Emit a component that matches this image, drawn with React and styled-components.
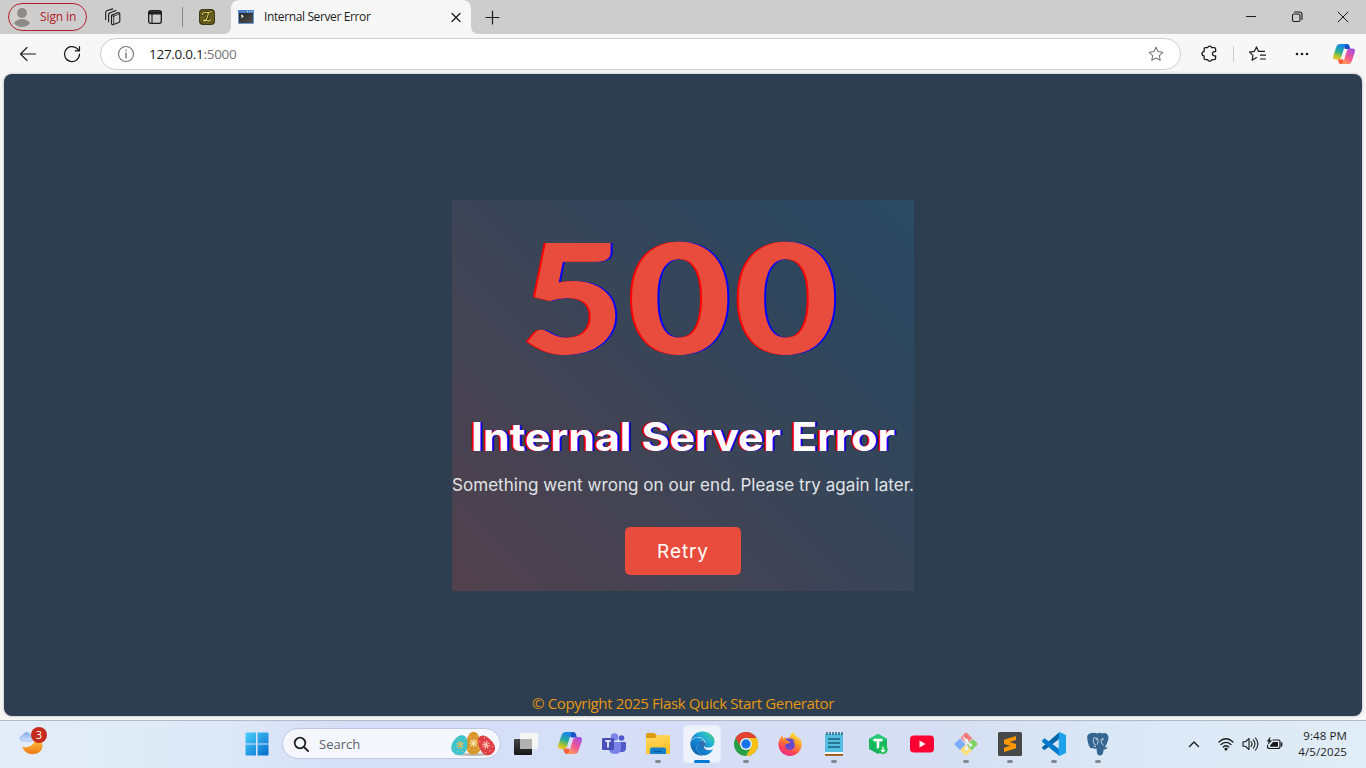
import React from 'react';
import styled, { createGlobalStyle } from 'styled-components';
import { SiFirefoxbrowser } from 'react-icons/si';
import { FaEdge } from 'react-icons/fa';

const GlobalStyle = createGlobalStyle`
  * { box-sizing: border-box; }
  body { margin: 0; overflow: hidden; }
`;

const ui = `"Open Sans", "Noto Sans", sans-serif`;

const Screen = styled.div`
  width: 1366px;
  height: 768px;
  display: flex;
  flex-direction: column;
  background: #f7f7f7;
  font-family: ${ui};
  overflow: hidden;
`;

const Label = styled.span`
  font-size: ${p => p.$size || 12}px;
  letter-spacing: ${p => p.$track || 0}px;
  color: ${p => p.$color || '#1b1b1b'};
  line-height: 16px;
  white-space: nowrap;
`;

/* Tab strip */
const TabStrip = styled.header`
  height: 34px;
  flex: none;
  display: flex;
  align-items: center;
  background: #cdcdcd;
`;
const SignIn = styled.div`
  width: 79px;
  height: 28px;
  margin-left: 8px;
  padding-left: 3px;
  border: 1px solid #b1202a;
  border-radius: 14px;
  display: flex;
  align-items: center;
  gap: 8px;
`;
const StripIcon = styled.span`
  display: flex;
  margin-left: ${p => p.$left}px;
`;
const StripDivider = styled.span`
  width: 1px;
  height: 20px;
  margin-left: 20px;
  background: #888;
`;
const Tab = styled.div`
  width: 240px;
  height: 34px;
  margin-left: 16px;
  padding: 0 8px 0 7px;
  display: flex;
  align-items: center;
  background: #f7f7f7;
  border-radius: 8px 8px 0 0;
  box-shadow: 8px 8px 0 0 #f7f7f7, -8px 8px 0 0 #f7f7f7;
  clip-path: path('M-8 34 Q0 34 0 26 V8 Q0 0 8 0 H232 Q240 0 240 8 V26 Q240 34 248 34 Z');
`;
const TabTitle = styled(Label)`
  flex: 1;
  margin-left: 10px;
`;
const WindowButtons = styled.div`
  margin-left: auto;
  display: flex;
`;
const WindowButton = styled.span`
  width: 46px;
  display: flex;
  justify-content: center;
`;

/* Address toolbar */
const Toolbar = styled.div`
  height: 40px;
  flex: none;
  display: flex;
  align-items: center;
  padding-left: 18px;
`;
const NavIcon = styled.span`
  width: 20px;
  margin-right: ${p => p.$right}px;
  display: flex;
  justify-content: center;
`;
const AddressBar = styled.div`
  width: 1081px;
  height: 32px;
  padding: 0 15px 0 16px;
  display: flex;
  align-items: center;
  background: #fff;
  border: 1px solid #cfcfcf;
  border-radius: 16px;
`;
const Url = styled(Label)`
  flex: 1;
  margin-left: 14px;
`;
const ToolbarActions = styled.div`
  display: flex;
  align-items: center;
  padding-left: 19px;
`;
const ActionDivider = styled.span`
  width: 1px;
  height: 16px;
  margin: 0 14px 0 14px;
  background: #ccc;
`;

/* Web page */
const Page = styled.main`
  height: 642px;
  flex: none;
  margin: 0 4px;
  padding-top: 126px;
  display: flex;
  flex-direction: column;
  align-items: center;
  background: #2c3e50;
  border-radius: 8px;
  box-shadow: 0 0 3px rgba(0, 0, 0, 0.3);
`;
const ErrorCard = styled.section`
  width: 462px;
  height: 391px;
  display: flex;
  flex-direction: column;
  align-items: center;
  font-family: Inter, "Open Sans", sans-serif;
  background: linear-gradient(45deg, rgba(231, 76, 60, 0.2), rgba(52, 100, 140, 0.22) 78%, rgba(42, 100, 140, 0.33));
  white-space: nowrap;
`;
const Code = styled.h1`
  margin: 0;
  height: 199px;
  padding-right: 3px;
  line-height: 191px;
  font-family: Lato, sans-serif;
  font-size: 153px;
  font-weight: 900;
  letter-spacing: 3px;
  transform: scaleX(1.165);
  color: #e74c3c;
  text-shadow: -1.7px 0 #f00, 1.7px 0 #00f;
`;
const Heading = styled.h2`
  margin: 13px 0 0;
  height: 49px;
  line-height: 49px;
  font-size: 39px;
  font-weight: 750;
  letter-spacing: 0;
  transform: scaleX(1.098);
  color: #fff;
  text-shadow: -1.8px 0 #f00, 1.8px 0 #00f;
`;
const Message = styled.p`
  margin: 13px 0 0;
  height: 22px;
  line-height: 22px;
  font-size: 17px;
  letter-spacing: 0.05px;
  color: #e0e4e5;
`;
const RetryButton = styled.button`
  width: 116px;
  height: 48px;
  margin: 31px 0 0;
  padding: 1px 0 0;
  border: 0;
  border-radius: 5px;
  background: #e74c3c;
  color: #fff;
  font: 400 19px/47px Inter, sans-serif;
  letter-spacing: 0.9px;
`;
const Footer = styled.footer`
  margin-top: auto;
  height: 25px;
  line-height: 24px;
  font-size: 15px;
  letter-spacing: -0.36px;
  color: #e8970f;
  white-space: nowrap;
`;

/* Taskbar */
const Taskbar = styled.nav`
  height: 48px;
  margin-top: 4px;
  flex: none;
  display: flex;
  align-items: center;
  border-top: 1px solid #b3bac6;
  padding-bottom: 2px;
  background: linear-gradient(90deg, #e2edf8 0%, #dfeaf8 14%, #d5e0f8 25%, #d5def6 50%, #d5def2 68%, #dae7f5 80%, #e0edf8 100%);
`;
const Weather = styled.div`
  width: 235px;
  padding: 0 0 4px 18px;
  display: flex;
`;
const AppCell = styled.div`
  position: relative;
  width: 44px;
  height: 45px;
  display: flex;
  justify-content: center;
  align-items: center;
`;
const ActivePlate = styled.div`
  width: 38px;
  height: 38px;
  display: flex;
  justify-content: center;
  align-items: center;
  background: #edf2fc;
  border: 1px solid #e4eaf7;
  border-radius: 4px;
`;
const Indicator = styled.span`
  position: absolute;
  bottom: 3px;
  left: 50%;
  width: ${p => (p.$active ? 16 : 6)}px;
  height: 3px;
  transform: translateX(-50%);
  border-radius: 2px;
  background: ${p => (p.$active ? '#0078d4' : '#838993')};
`;
const SearchBox = styled.div`
  width: 219px;
  height: 31px;
  margin: 0 3px;
  padding: 0 5px 0 10px;
  display: flex;
  align-items: center;
  background: #f4f7fe;
  border: 1px solid #bdc8e0;
  border-radius: 16px;
`;
const SearchText = styled(Label)`
  flex: 1;
  margin-left: 10px;
`;
const Tray = styled.div`
  margin-left: auto;
  padding-right: 19px;
  display: flex;
  align-items: center;
`;
const TrayIcon = styled.span`
  display: flex;
  margin-right: ${p => p.$right}px;
`;
const Clock = styled.div`
  width: 52px;
  display: flex;
  flex-direction: column;
  align-items: flex-end;
`;

const Line = ({ w = 20, h = 20, box, color = '#1b1b1b', sw = 1.2, children }) => (
  <svg width={w} height={h} viewBox={box || `0 0 ${w} ${h}`} fill="none" stroke={color}
    strokeWidth={sw} strokeLinecap="round" strokeLinejoin="round">{children}</svg>
);
const star = 'M10 2.4l2.3 4.9 5.3.7-3.9 3.7 1 5.3-4.7-2.6L5.3 17l1-5.3L2.4 8l5.3-.7z';

const Avatar = () => (
  <svg width="20" height="22" viewBox="0 0 20 22">
    <circle cx="10" cy="11" r="10" fill="#d5d0cc" />
    <circle cx="10" cy="7" r="5" fill="#8d8b89" />
    <path d="M2 17q3-4 8-4t8 4q-3 4-8 4t-8-4z" fill="#8d8b89" />
  </svg>
);
const Workspaces = () => (
  <Line w={18} h={18} sw={1.1}>
    <path d="M7.500 7.300l6-2.500q1.800-.6 2.300 1v7.600l-1 1.200-5.300 2q-1.700.5-2-1z" />
    <path d="M9.700 8.200v7.500M9.700 8.200l5.800-2.400M7.700 7.500l2 .7" strokeWidth=".8" />
    <path d="M4.600 13.800V6.400l1-1.500 6.200-2.500M1.700 11.500V4.300l1-1.600L8.700.9" />
  </Line>
);
const TabPane = () => (
  <Line w={14} h={14} sw={1.3}>
    <rect x=".7" y=".7" width="12.6" height="12.6" rx="2" />
    <path d="M1 2h12v1.8H1z" fill="#1b1b1b" /><path d="M4 4v9" strokeWidth="1.1" />
  </Line>
);
const LetterBadge = () => (
  <svg width="16" height="16" viewBox="0 0 16 16">
    <rect width="16" height="16" rx="4" fill="#3d3811" />
    <rect x="1" y="1" width="14" height="14" rx="4" fill="#6a5f20" />
    <path d="M3.500 6.500Q3 3.500 7 3.500t6-1M9.500 4q-1 5-3.100 8H4.300q.6-1.600 2.400-.8l3 .8 2.300-1.600" fill="none" stroke="#2c2808" strokeWidth="2.600" />
    <path d="M3.500 6Q3 3.300 7 3.500t6-1M9.500 4q-1 5-3.100 8H4.300q.6-1.600 2.400-.8l3 .8 2.300-1.600" fill="none" stroke="#dccb66" strokeWidth="1.200" />
  </svg>
);
const TerminalIcon = () => (
  <svg width="16" height="14" viewBox="0 0 16 14">
    <defs><linearGradient id="term" x2="1" y2="1"><stop stopColor="#252525" /><stop offset="1" stopColor="#505050" /></linearGradient></defs>
    <rect width="16" height="14" rx="1" fill="#6b99d6" />
    <path d="M0 1q0-1 1-1h14q1 0 1 1v2H0z" fill="#4a7ec7" />
    <path d="M9 1.5h1m1.3 0h1m1.3 0h1" stroke="#dae7f7" />
    <rect x="1" y="3" width="14" height="10" fill="url(#term)" />
    <path d="M3.300 5L4.900 6.300 3.300 7.600" fill="none" stroke="#fff" strokeWidth="1.100" />
  </svg>
);
const Copilot = ({ size, id }) => (
  <svg width={size} height={size * 0.92} viewBox="0 0 24 22">
    <defs>
      <linearGradient id={`${id}a`} x1=".5" x2=".2" y2="1"><stop stopColor="#1683e8" /><stop offset=".45" stopColor="#25ad9c" /><stop offset=".75" stopColor="#a8c531" /><stop offset="1" stopColor="#fbc32a" /></linearGradient>
      <linearGradient id={`${id}b`} x1=".8" x2=".2" y2="1"><stop stopColor="#a34ee5" /><stop offset=".5" stopColor="#ef5596" /><stop offset="1" stopColor="#ffa052" /></linearGradient>
    </defs>
    <path d="M11 0h4.200q2 0 2.700 2l1 3.500h-6z" fill="#194fc5" />
    <path d="M5 16.500h6l2 5.500H8.800Q6.700 22 6 19.500z" fill="#f5633d" />
    <path d="M7.800 0H15q-1.800.4-2.500 3L9 14.500Q8.100 17 5.500 17H3Q-.7 17 .3 13L3.500 3.200Q4.700 0 7.800 0z" fill={`url(#${id}a)`} />
    <path d="M16.200 22H9q1.800-.4 2.500-3L15 7.500Q15.900 5 18.500 5H21q3.700 0 2.700 4l-3.200 9.800Q19.300 22 16.200 22z" fill={`url(#${id}b)`} />
  </svg>
);
const WeatherIcon = () => (
  <svg width="30" height="30" viewBox="0 0 30 30">
    <defs>
      <linearGradient id="moon" x2="0" y2="1"><stop stopColor="#ffc53b" /><stop offset="1" stopColor="#ed7818" /></linearGradient>
      <linearGradient id="cloud" x2="0" y2="1"><stop stopColor="#83aaf0" /><stop offset="1" stopColor="#d6e6ff" /></linearGradient>
    </defs>
    <path d="M4 20q7 1 11-3 2-2 2-5 8 1 7.500 7-1 8-10 8.200Q7 27 4 20z" fill="url(#moon)" />
    <path d="M5 14q-3 0-3-2.500t3-3Q6 5 9.300 5.500q2.700.5 3.500 3.500 3 2 1.200 5z" fill="url(#cloud)" stroke="#7ea4e7" strokeWidth=".6" />
    <circle cx="21" cy="8" r="8" fill="#c42b1c" />
    <text x="21" y="12" textAnchor="middle" fontFamily="Open Sans, sans-serif" fontSize="11" fill="#fff">3</text>
  </svg>
);
const WindowsLogo = () => (
  <svg width="24" height="24" viewBox="0 0 24 24">
    <defs><linearGradient id="win" gradientUnits="userSpaceOnUse" x1="0" y1="0" x2="24" y2="24"><stop stopColor="#4fd3ff" /><stop offset="1" stopColor="#0069c9" /></linearGradient></defs>
    <path d="M1 .5h10v11H.5V1zM12.500.5H23l.5.5v10.500h-11zM.5 12.500H11v11H1l-.5-.5zM12.500 12.500h11V23l-.5.5H12.500z" fill="url(#win)" />
  </svg>
);
const Egg = ({ x, y, r, w, h, fill, mark }) => (
  <g transform={`translate(${x} ${y}) rotate(${r})`}>
    <path d={`M0 ${-h}C${w * .8} ${-h} ${w} 0 ${w} ${h * .2}C${w} ${h * .75} ${w * .6} ${h} 0 ${h}S${-w} ${h * .75} ${-w} ${h * .2}C${-w} 0 ${-w * .8} ${-h} 0 ${-h}z`} fill={fill} />
    <path d="M-4 0h8M0-4v8M-3-3l6 6M3-3l-6 6M-5 6h1m4 1h1m3-2h1M-4-6h1m5-1h1" stroke={mark} strokeWidth="1.1" />
  </g>
);
const Eggs = () => (
  <svg width="44" height="26" viewBox="0 0 44 26">
    <ellipse cx="22" cy="23.500" rx="19" ry="1.500" fill="#bdb7b3" />
    <Egg x={22.500} y={12} r={0} w={7.500} h={11.300} fill="#d9962b" mark="#fae0a0" />
    <Egg x={9} y={14} r={22} w={7.800} h={10} fill="#3bc5cf" mark="#e9bc58" />
    <Egg x={35} y={14} r={-32} w={7.300} h={10.500} fill="#e03e45" mark="#ffc2ad" />
  </svg>
);
const TaskView = () => (
  <svg width="26" height="24" viewBox="0 0 26 24">
    <defs><linearGradient id="tv" x2="0" y2="1"><stop stopColor="#454545" /><stop offset="1" stopColor="#161616" /></linearGradient></defs>
    <rect x="1" y="7" width="18" height="16" rx="1" fill="url(#tv)" />
    <rect x="7" y="1" width="18" height="16" rx="1" fill="#f5f5f4" /><path d="M7 7h12v10H7z" fill="#b1b1b1" />
  </svg>
);
const Teams = () => (
  <svg width="24" height="22" viewBox="0 0 24 22">
    <circle cx="19.500" cy="5" r="2.800" fill="#5059c9" /><path d="M16 9h7q1 0 1 1v5q0 4-4 4h-4z" fill="#5059c9" />
    <circle cx="12.500" cy="4" r="3.700" fill="#7b83eb" /><path d="M7 9h12v6.500q0 5.500-6 5.500t-6-5.500z" fill="#7b83eb" />
    <rect y="5" width="12" height="12" rx="1" fill="#4950b8" /><path d="M3.200 8h5.600M6 8v6.500" stroke="#fff" strokeWidth="1.600" />
  </svg>
);
const Folder = () => (
  <svg width="24" height="22" viewBox="0 0 24 22">
    <defs><linearGradient id="fold" x2=".4" y2="1"><stop stopColor="#ffdc69" /><stop offset="1" stopColor="#ffbf26" /></linearGradient></defs>
    <path d="M0 1.500Q0 0 1.500 0h6q1 0 2 1L11 3v5H0z" fill="#dc9c0b" />
    <path d="M0 5h9l2.500-3H23q1 0 1 1v17q0 1-1 1H1q-1 0-1-1z" fill="url(#fold)" />
    <path d="M4 21v-4.500Q4 14.500 6 14.500h12q2 0 2 2V21z" fill="#1380ce" /><path d="M8 18.500h8" stroke="#075a9d" strokeWidth="1.300" />
  </svg>
);
const Edge = () => (
  <svg width="25" height="25" viewBox="0 0 25 25">
    <defs><linearGradient id="edg" x1="0" y1="1" x2="1" y2="0"><stop stopColor="#0b55a5" /><stop offset=".45" stopColor="#1589d4" /><stop offset=".7" stopColor="#25b8d3" /><stop offset="1" stopColor="#55d65a" /></linearGradient></defs>
    <path d="M8 11q5-4 8 2l-2 3q1 4 8 3-5 7-11 4.500Q5 20 8 11z" fill="#0c59a4" opacity=".85" />
    <FaEdge size={25} fill="url(#edg)" />
  </svg>
);
const Chrome = () => (
  <svg width="24" height="24" viewBox="0 0 24 24">
    <circle cx="12" cy="12" r="12" fill="#28a047" />
    <path d="M1.600 6A12 12 0 0 1 22.400 6H12a6 6 0 0 0-5.200 9z" fill="#e34133" />
    <path d="M22.400 6A12 12 0 0 1 12 24l5.200-9A6 6 0 0 0 12 6z" fill="#fbc116" />
    <circle cx="12" cy="12" r="6" fill="#fff" /><circle cx="12" cy="12" r="4.700" fill="#1a73e8" />
  </svg>
);
const Firefox = () => (
  <svg width="24" height="24" viewBox="0 0 24 24">
    <defs><linearGradient id="ffx" x1=".8" y1="0" x2=".3" y2="1"><stop stopColor="#fff04a" /><stop offset=".4" stopColor="#ff9b24" /><stop offset=".75" stopColor="#ff4455" /><stop offset="1" stopColor="#e52b91" /></linearGradient></defs>
    <circle cx="11.800" cy="12.500" r="7" fill="#6848cf" />
    <SiFirefoxbrowser size={24} fill="url(#ffx)" />
  </svg>
);
const Notepad = () => (
  <svg width="20" height="26" viewBox="0 0 20 26">
    <rect x="1" y="3" width="18" height="19" rx="1" fill="#54bde0" />
    <path d="M3 1v3M6 1v3M9 1v3M12 1v3M15 1v3M18 1v3" stroke="#17627e" strokeWidth="1.400" />
    <path d="M4 8h12M4 12h12M4 16h12" stroke="#17627e" strokeWidth="1.600" />
    <path d="M1 21h18v2H1z" fill="#f6f7f7" /><path d="M1 23h18v1.800H1z" fill="#9d520e" />
  </svg>
);
const Hexagon = () => (
  <svg width="24" height="24" viewBox="0 0 24 24">
    <path d="M12 2l9 5v10l-9 5-9-5V7z" fill="#15b55c" /><path d="M12 2l9 5-9 5-9-5z" fill="#22c970" />
    <path d="M7.500 8h9M12 8v8.500" stroke="#fff" strokeWidth="2.600" /><circle cx="17" cy="17.500" r="4.700" fill="#20bd58" />
    <path d="M17 14.800v5m-2-2l2 2 2-2" fill="none" stroke="#fff" strokeWidth="1.200" />
  </svg>
);
const Youtube = () => (
  <svg width="24" height="18" viewBox="0 0 24 18"><rect y=".5" width="24" height="17" rx="4" fill="#ff0033" /><path d="M9.500 5.500v7l6-3.500z" fill="#fff" /></svg>
);
const Git = () => (
  <svg width="24" height="24" viewBox="0 0 24 24">
    <path d="M11 1q1-1 2 0l5.500 5.500-6 5L6.500 6z" fill="#f77d7d" /><path d="M19 7l4 4q1 1 0 2l-5.500 5.500-5-6z" fill="#80d063" />
    <path d="M11.500 12.500l6 6L13 23q-1 1-2 0l-5-5z" fill="#ffdf76" /><path d="M6 6.500l5.500 6L6 18l-5-5q-1-1 0-2z" fill="#7cadfa" />
    <path d="M9 5l3.500 4v8M12.500 9l4 4" stroke="#eff0f4" strokeWidth="1.600" fill="none" />
    <circle cx="12.500" cy="8.500" r="1.800" fill="#eff0f4" /><circle cx="12.500" cy="17" r="1.800" fill="#eff0f4" /><circle cx="16.500" cy="13" r="1.800" fill="#eff0f4" />
  </svg>
);
const Sublime = () => (
  <svg width="24" height="24" viewBox="0 0 24 24"><rect width="24" height="24" rx="1.500" fill="#484848" />
    <path d="M6 7.800l12-3.900v4l-6.500 2.200L18 12v4.200L6 20v-4.200l6.500-2L6 12z" fill="#ff9800" /></svg>
);
const VSCode = () => (
  <svg width="24" height="24" viewBox="0 0 24 24">
    <path d="M0 15.200L17.500 0v6.700L2.500 18 .4 16.800z" fill="#0065a9" />
    <path d="M0 8.500l2.500-2.200 15 11V24L.3 10z" fill="#007acc" />
    <path d="M17.500 0L24 3v18l-6.500 3q-.7-.3-.7-1V1q0-.7.700-1z" fill="#1ea2ed" />
  </svg>
);
const Postgres = () => (
  <svg width="24" height="24" viewBox="0 0 24 24">
    <path d="M5.500 1Q9 .3 11 1.500q3-1.300 5 0 3-1.200 5 .5 2.500 2.500.8 7-1 3.500-3 6.200l3 .3q-1 2-4.200 2.200-.3 4.800-2.600 5.500-3.500.9-4-2.700l-.5-4q-2 .8-4-.4-2.200 1-3.500-2Q1 8.500 1.200 4.800 1.500 1.500 5.500 1z" fill="#336791" />
    <path d="M8.500 5Q7 7 7.500 10q.4 2.700 2.500 3M9 6.200q3-1 3 1.200.4 2.500-.8 5.300M18 7q-3-1.200-3 1.200 0 3 2.500 5.500M7.300 13.700q.7 1 2.700 .8" fill="none" stroke="#dce4ee" strokeWidth=".8" />
    <path d="M10 7.500h.8M16.200 8h.7" stroke="#fff" strokeWidth="1.200" />
  </svg>
);
const Wifi = () => (
  <Line w={16} h={14} sw={1.200}><path d="M1 5Q8-1.500 15 5M3 7.500q5-4.400 10 0M5.200 10q2.800-2.500 5.600 0" /><circle cx="8" cy="12" r="1" fill="#1b1b1b" /></Line>
);
const Volume = () => (
  <Line w={17} h={14} sw={1.1}><path d="M1 4.800h2.500L7 1.500v11L3.500 9.300H1zM9 4.500q2 2.500 0 5M11.300 2.800q3.300 4.200 0 8.400M13.500 1q4.700 6 0 12" /></Line>
);
const Battery = () => (
  <Line w={17} h={14} sw={1.2}><path d="M7 3h5.500q1.500 0 1.500 1.500v5q0 2-2 2H3.500q-2 0-2-2V8.500" /><path d="M15.600 6v3" strokeWidth="1.500" />
    <path d="M7 5h5v4.700H4V8.500z" fill="#1b1b1b" stroke="none" /><path d="M4 .4L1 4.300h2L2 7.500l3.800-4H3.900z" fill="#1b1b1b" strokeWidth=".4" /></Line>
);

const apps = [
  { name: 'taskview', icon: <TaskView /> },
  { name: 'copilot', icon: <Copilot size={24} id="tb" /> },
  { name: 'teams', icon: <Teams /> },
  { name: 'explorer', icon: <Folder />, open: true },
  { name: 'edge', icon: <Edge />, open: true, active: true },
  { name: 'chrome', icon: <Chrome />, open: true },
  { name: 'firefox', icon: <Firefox /> },
  { name: 'notepad', icon: <Notepad />, open: true },
  { name: 'downloader', icon: <Hexagon /> },
  { name: 'youtube', icon: <Youtube /> },
  { name: 'git', icon: <Git />, open: true },
  { name: 'sublime', icon: <Sublime />, open: true },
  { name: 'vscode', icon: <VSCode />, open: true },
  { name: 'postgres', icon: <Postgres />, open: true },
];

export default function App() {
  return (
    <Screen>
      <GlobalStyle />
      <TabStrip>
        <SignIn><Avatar /><Label $color="#b1202a" $track={-0.1}>Sign in</Label></SignIn>
        <StripIcon $left={17}><Workspaces /></StripIcon>
        <StripIcon $left={26}><TabPane /></StripIcon>
        <StripDivider />
        <StripIcon $left={16}><LetterBadge /></StripIcon>
        <Tab>
          <TerminalIcon />
          <TabTitle $track={-0.38}>Internal Server Error</TabTitle>
          <Line w={14} h={14} sw={1.3}><path d="M3 3.500l8 8M11 3.500l-8 8" /></Line>
        </Tab>
        <StripIcon $left={14}><Line w={15} h={15} sw={1.2}><path d="M7.500 1v13M1 7.500h13" /></Line></StripIcon>
        <WindowButtons>
          <WindowButton><Line w={12} h={12} sw={1}><path d="M1.500 5.500h9" /></Line></WindowButton>
          <WindowButton><Line w={12} h={12} sw={1.1}><rect x="1.500" y="3" width="7.500" height="7.500" rx="1.500" /><path d="M3.500 1h5Q11 1 11 3.500v5" /></Line></WindowButton>
          <WindowButton><Line w={12} h={12} sw={1}><path d="M1 1l10 10M11 1L1 11" /></Line></WindowButton>
        </WindowButtons>
      </TabStrip>
      <Toolbar>
        <NavIcon $right={24}><Line sw={1.1}><path d="M17.500 10h-15M9 3.500L2.500 10 9 16.500" /></Line></NavIcon>
        <NavIcon $right={18}><Line sw={1.2}><path d="M17.500 10A7.500 7.500 0 1 1 15 4.500L17 6.500M17.500 2.500v4.300h-4.300" /></Line></NavIcon>
        <AddressBar>
          <Line w={18} h={18} color="#767676" sw={1.1}><circle cx="9" cy="9" r="7.500" /><path d="M9 8v5M9 5.300v.2" strokeWidth="1.400" /></Line>
          <Url $size={13.5} $track={-0.28}>127.0.0.1<Label $size={13.5} $track={-0.28} $color="#767676">:5000</Label></Url>
          <Line w={18} h={18} box="0 0 20 20" color="#757575" sw={1.2}><path d={star} /></Line>
        </AddressBar>
        <ToolbarActions>
          <Line w={19} h={19} sw={1.3}><path d="M5 3.700h2.700a2.100 2.100 0 0 1 4.100 0h2.400q1.400 0 1.400 1.400v2.500h-1.100a2.100 2.100 0 1 0 0 4.200h1.100v2.500q0 1.400-1.400 1.400h-2.400a2.100 2.100 0 0 1-4.100 0H5.500q-1.400 0-1.400-1.400v-2.500a2.100 2.100 0 0 1 0-4.200V5.100q0-1.400 1.400-1.400" /></Line>
          <ActionDivider />
          <NavIcon $right={24}><Line w={20} h={20} sw={1.2}><path d="M8.500 13.600l-4.400 2.600.9-4.800-3.500-3.300 4.800-.7L8.500 3l2 4.400h6M12.500 11.200h5M12.500 15h5" /></Line></NavIcon>
          <NavIcon $right={21}><Line w={16} h={4} color="none"><g fill="#1b1b1b"><circle cx="3" cy="2" r="1.300" /><circle cx="8" cy="2" r="1.300" /><circle cx="13" cy="2" r="1.300" /></g></Line></NavIcon>
          <Copilot size={22} id="tool" />
        </ToolbarActions>
      </Toolbar>
      <Page>
        <ErrorCard>
          <Code>500</Code>
          <Heading>Internal Server Error</Heading>
          <Message>Something went wrong on our end. Please try again later.</Message>
          <RetryButton>Retry</RetryButton>
        </ErrorCard>
        <Footer>© Copyright 2025 Flask Quick Start Generator</Footer>
      </Page>
      <Taskbar>
        <Weather><WeatherIcon /></Weather>
        <AppCell><WindowsLogo /></AppCell>
        <SearchBox>
          <Line w={16} h={16} sw={1.800} color="#222"><circle cx="7" cy="7" r="5.300" /><path d="M11 11l4 4" /></Line>
          <SearchText $size={13} $color="#5c6068">Search</SearchText>
          <Eggs />
        </SearchBox>
        {apps.map(a => (
          <AppCell key={a.name}>
            {a.active ? <ActivePlate>{a.icon}</ActivePlate> : a.icon}
            {a.open && <Indicator $active={a.active} />}
          </AppCell>
        ))}
        <Tray>
          <TrayIcon $right={18}><Line w={12} h={8} sw={1.400}><path d="M1.500 6.500L6 2l4.500 4.500" /></Line></TrayIcon>
          <TrayIcon $right={8}><Wifi /></TrayIcon>
          <TrayIcon $right={7}><Volume /></TrayIcon>
          <TrayIcon $right={12}><Battery /></TrayIcon>
          <Clock><Label $size={11.5} $track={0.1}>9:48 PM</Label><Label $size={11.5} $track={0.1}>4/5/2025</Label></Clock>
        </Tray>
      </Taskbar>
    </Screen>
  );
}
